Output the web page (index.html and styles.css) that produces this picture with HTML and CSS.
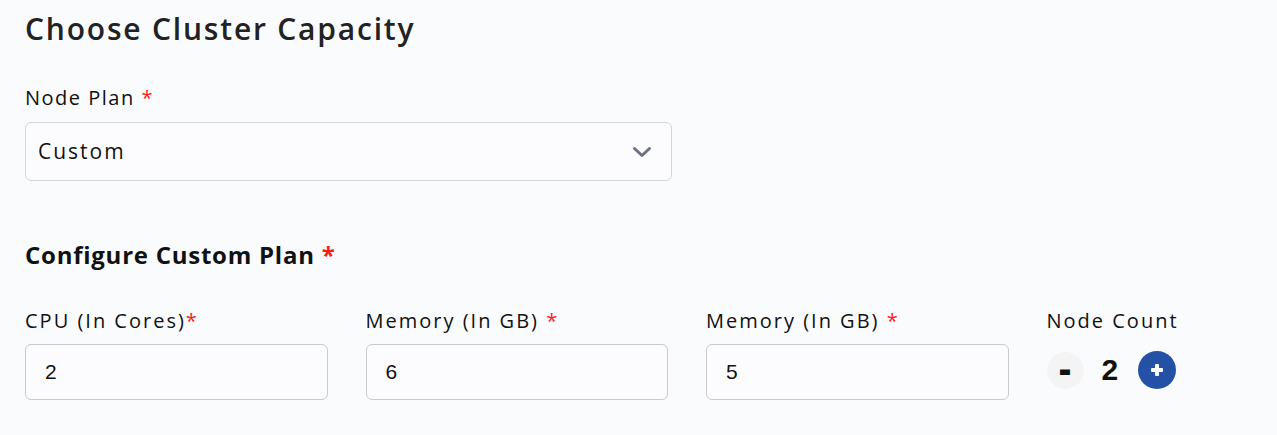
FILE: index.html
```html
<!DOCTYPE html>
<html lang="en">
<head>
<meta charset="utf-8">
<title>Choose Cluster Capacity</title>
<link rel="stylesheet" href="styles.css">
</head>
<body>
<main class="page">
  <h1 class="title">Choose Cluster Capacity</h1>

  <section class="field plan-field">
    <label class="label plan-label">Node Plan <span class="req">*</span></label>
    <div class="select">
      <span class="select-value">Custom</span>
      <svg class="chevron" width="20" height="12" viewBox="0 0 20 12" aria-hidden="true">
        <path d="M2.5 2.5 L10 9.5 L17.5 2.5" fill="none" stroke="#6b7280" stroke-width="3" stroke-linecap="round" stroke-linejoin="round"/>
      </svg>
    </div>
  </section>

  <h2 class="subtitle">Configure Custom Plan <span class="req">*</span></h2>

  <section class="grid">
    <div class="field">
      <label class="label">CPU (In Cores)<span class="req">*</span></label>
      <div class="input">2</div>
    </div>
    <div class="field">
      <label class="label">Memory (In GB) <span class="req">*</span></label>
      <div class="input">6</div>
    </div>
    <div class="field">
      <label class="label">Memory (In GB) <span class="req">*</span></label>
      <div class="input">5</div>
    </div>
    <div class="field">
      <label class="label">Node Count</label>
      <div class="counter">
        <button class="btn minus" type="button">-</button>
        <span class="count">2</span>
        <button class="btn plus" type="button" aria-label="Increase">
          <span class="plus-icon"></span>
        </button>
      </div>
    </div>
  </section>
</main>
</body>
</html>
```

FILE: styles.css
```css
* { box-sizing: border-box; }

html, body {
  margin: 0;
  padding: 0;
  background: #fafbfd;
}

body {
  font-family: "Open Sans", "Liberation Sans", sans-serif;
  color: #111111;
}

.page {
  padding: 8px 25px 0 25px;
}

.title {
  margin: 0;
  font-size: 30px;
  font-weight: 600;
  color: #222222;
  line-height: 42px;
  letter-spacing: 1.8px;
}

.plan-field {
  margin-top: 36px;
  width: 647px;
}

.label {
  display: block;
  font-size: 20px;
  line-height: 24px;
  color: #111111;
  font-weight: 400;
  letter-spacing: 2px;
}

.plan-label {
  letter-spacing: 1.5px;
}

.req {
  color: #ff1a1a;
  letter-spacing: 0;
}

.select {
  margin-top: 12px;
  height: 59px;
  border: 1px solid #d4d6dc;
  border-radius: 6px;
  background: #fcfcfe;
  display: flex;
  align-items: center;
  justify-content: space-between;
  padding: 0 19px 0 12px;
}

.select-value {
  font-size: 21px;
  letter-spacing: 2px;
  padding-bottom: 1px;
}

.chevron { display: block; }

.subtitle {
  margin: 59px 0 0 0;
  font-size: 24px;
  font-weight: 700;
  line-height: 30px;
  color: #111111;
  letter-spacing: 0.75px;
}

.grid {
  margin-top: 38px;
  display: grid;
  grid-template-columns: 302.5px 302.5px 302.5px 200px;
  column-gap: 38px;
}

.grid .label {
  line-height: 26px;
}

.input {
  margin-top: 10px;
  height: 56px;
  border: 1px solid #c9cacd;
  border-radius: 6px;
  background: #fcfcfe;
  display: flex;
  align-items: center;
  padding-left: 19px;
  font-family: "Liberation Sans", Arial, sans-serif;
  font-size: 21px;
  color: #111111;
}

.counter {
  margin-top: 16px;
  display: flex;
  align-items: center;
  height: 40px;
}

.btn {
  width: 38px;
  height: 38px;
  border-radius: 50%;
  border: none;
  padding: 0;
  display: flex;
  align-items: center;
  justify-content: center;
  cursor: pointer;
}

.minus {
  width: 37px;
  height: 37px;
  background: #f4f4f4;
  font-family: "Open Sans", sans-serif;
  font-size: 36px;
  font-weight: 800;
  color: #111111;
  line-height: 1;
  padding-bottom: 3px;
}

.count {
  font-family: "Liberation Sans", Arial, sans-serif;
  font-size: 30px;
  font-weight: 700;
  margin: 0 20px 0 18px;
}

.plus {
  background: #2451a6;
}

.plus-icon {
  position: relative;
  display: block;
  width: 12px;
  height: 12px;
  flex: none;
}

.plus-icon::before,
.plus-icon::after {
  content: "";
  position: absolute;
  background: #ffffff;
  border-radius: 1px;
}

.plus-icon::before {
  left: 0;
  top: 4px;
  width: 12px;
  height: 4px;
}

.plus-icon::after {
  left: 4px;
  top: 0;
  width: 4px;
  height: 12px;
}
```
